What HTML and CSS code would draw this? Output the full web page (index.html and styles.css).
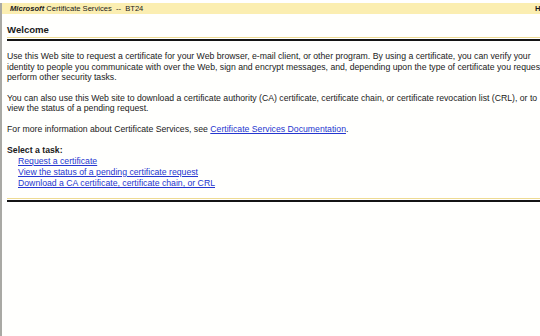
FILE: index.html
```
<!DOCTYPE html>
<html lang="en">
<head>
    <meta charset="UTF-8">
    <title>Microsoft Certificate Services</title>
    <link rel="stylesheet" href="styles.css">
</head>
<body>
    <div class="page">
        <!-- Title bar -->
        <div class="topbar">
            <span><b><i>Microsoft</i></b> Certificate Services &nbsp;--&nbsp; BT24</span>
            <a class="home" href="#">Home</a>
        </div>

        <div class="content">
            <h1 class="title">Welcome</h1>
            <div class="rule"></div>

            <p>Use this Web site to request a certificate for your Web browser, e-mail client, or other program. By using a certificate, you can verify your identity to people you communicate with over the Web, sign and encrypt messages, and, depending upon the type of certificate you request, perform other security tasks.</p>

            <p>You can also use this Web site to download a certificate authority (CA) certificate, certificate chain, or certificate revocation list (CRL), or to view the status of a pending request.</p>

            <p>For more information about Certificate Services, see <a href="#">Certificate Services Documentation</a>.</p>

            <div class="tasks">
                <b>Select a task:</b>
                <a href="#">Request a certificate</a>
                <a href="#">View the status of a pending certificate request</a>
                <a href="#">Download a CA certificate, certificate chain, or CRL</a>
            </div>

            <div class="rule bottom"></div>
        </div>
    </div>
</body>
</html>
```
FILE: styles.css
```
html, body {
    margin: 0;
    height: 100%;
    overflow: hidden;
    background-color: #fff;
}
body {
    font-family: "Liberation Sans", Arial, sans-serif;
    color: #1a1a1a;
}
/* whole page, wider than the window so the right edge is cut */
.page {
    width: 552px;
    height: 100%;
    border-left: 2px solid #a9a9a4;
    background-color: #fffffd;
}

/* Title bar */
.topbar {
    margin: 3px -2px 0 0;
    height: 11px;
    background-color: #fbeeb1;
    display: flex;
    justify-content: space-between;
    align-items: center;
    padding: 0 0 0 8px;
    font-size: 7.6px;
    color: #1a1a1a;
}
.topbar .home {
    color: #1a1a1a;
    font-weight: bold;
    text-decoration: none;
}

.content {
    padding: 0 0 0 5px;
    font-size: 8.7px;
    line-height: 10.5px;
}
.title {
    margin: 10px 0 0 0;
    font-size: 9.6px;
    line-height: 12px;
}
.rule {
    margin: 1px 0 0 0;
    height: 1px;
    border-top: 1px solid #eedb93;
    border-bottom: 2px solid #141414;
    background-color: #fff;
}
p {
    margin: 10px 0 0 0;
}
a {
    color: #2536cf;
}
.tasks {
    margin-top: 11px;
    display: flex;
    flex-direction: column;
    line-height: 11px;
}
.tasks a {
    margin-left: 11px;
}
.rule.bottom {
    margin-top: 9px;
}
```
